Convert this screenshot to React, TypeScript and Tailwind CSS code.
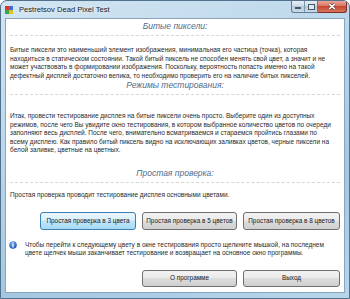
import clsx from "clsx";

const para1 = [
  "Битые пиксели это наименьший элемент изображения, минимальная его частица (точка), которая",
  "находиться в статическом состоянии. Такой битый пиксель не способен менять свой цвет, а значит и не",
  "может участвовать в формировании изображения. Поскольку, вероятность попасть именно на такой",
  "дефектный дисплей достаточно велика, то необходимо проверить его на наличие битых пикселей.",
];

const para2 = [
  "Итак, провести тестирование дисплея на битые пиксели очень просто. Выберите один из доступных",
  "режимов, после чего Вы увидите окно тестирования, в котором выбранное количество цветов по очереди",
  "заполняют весь дисплей. После чего, внимательно всматриваемся и стараемся пройтись глазами по",
  "всему дисплею. Как правило битый пиксель видно на исключающих заливках цветов, черные пиксели на",
  "белой заливке, цветные на цветных.",
];

const info = [
  "Чтобы перейти к следующему цвету в окне тестирования просто щелкните мышкой, на последнем",
  "цвете щелчек мыши заканчивает тестирование и возвращает на основное окно программы.",
];

function Lines({ lines }: { lines: string[] }) {
  return (
    <div className="leading-[8.5px]">
      {lines.map((l) => (
        <div key={l} className="whitespace-nowrap">
          {l}
        </div>
      ))}
    </div>
  );
}

function Heading({ children }: { children: string }) {
  return (
    <div className="h-[10px] text-center text-[8.5px] leading-[10px] italic text-[#536b89]">
      {children}
    </div>
  );
}

function Dash() {
  return <div className="mx-[4px] h-0 border-t border-dashed border-[#d6d6d6]" />;
}

function Btn({
  children,
  focused,
  className,
}: {
  children: string;
  focused?: boolean;
  className?: string;
}) {
  return (
    <button
      className={clsx(
        "rounded-[3px] border text-[6.4px] leading-none text-[#1a1a1a]",
        focused
          ? "border-[#3c7fb1] bg-[linear-gradient(#eaf6fd,#d9f0fc_45%,#bee6fd_50%,#a7d9f5)]"
          : "border-[#707070] bg-[linear-gradient(#f2f2f2,#ebebeb_45%,#dddddd_50%,#cfcfcf)]",
        className
      )}
    >
      {children}
    </button>
  );
}

function AppIcon() {
  return (
    <svg width="8" height="8" viewBox="0 0 8 8">
      <rect x="0" y="0" width="4" height="4" fill="#d93a2b" />
      <rect x="4" y="0" width="4" height="4" fill="#3a6fd9" />
      <rect x="0" y="4" width="4" height="4" fill="#3aa64a" />
      <rect x="4" y="4" width="4" height="4" fill="#e3c02b" />
    </svg>
  );
}

function InfoIcon() {
  return (
    <svg width="8" height="8" viewBox="0 0 8 8">
      <defs>
        <radialGradient id="ig" cx="40%" cy="30%" r="70%">
          <stop offset="0" stopColor="#7fb2ee" />
          <stop offset="1" stopColor="#1d55b0" />
        </radialGradient>
      </defs>
      <circle cx="4" cy="4" r="3.8" fill="url(#ig)" />
      <rect x="3.4" y="1.4" width="1.2" height="1.1" fill="#fff" />
      <rect x="3.4" y="3.1" width="1.2" height="3.4" fill="#fff" />
    </svg>
  );
}

export default function App() {
  return (
    <div className="flex h-[299px] w-[350px] flex-col overflow-hidden rounded-t-[7px] border border-[#52718d] bg-[linear-gradient(160deg,#d3e6f3,#b8d5e9_40%,#a3c8e0_70%,#b8d6ea)] font-['Liberation_Sans',Arial,sans-serif]">
      <div className="flex h-[17px] shrink-0 items-center">
        <div className="ml-[4px] mr-[6px] flex">
          <AppIcon />
        </div>
        <div className="text-[7.6px] text-[#1b1b1b] [text-shadow:0_0_5px_#ffffff]">
          Pestretsov Dead Pixel Test
        </div>
        <div className="mr-[2px] ml-auto flex self-start">
          <div className="flex h-[12px] w-[27px] items-center rounded-bl-[3px] border border-t-0 border-[#5f7b95] bg-[linear-gradient(#e4edf5,#cbdae7_50%,#b5c9d9_50%,#c9dbe8)]">
            <div className="flex w-[12px] justify-center">
              <div className="mt-[3px] h-[2px] w-[6px] border border-[#46586a] bg-white" />
            </div>
            <div className="h-full w-px bg-[#7f97ad]" />
            <div className="flex flex-1 justify-center">
              <div className="h-[6px] w-[7px] border border-[#46586a] bg-[#dfe9f2]" />
            </div>
          </div>
          <div className="flex h-[12px] w-[29px] items-center justify-center rounded-br-[3px] border border-t-0 border-l-0 border-[#7a3126] bg-[linear-gradient(#eba597,#d7705c_50%,#c34a33_50%,#d9735a)]">
            <svg width="8" height="7" viewBox="0 0 8 7">
              <path d="M1 0.8 L7 6.2 M7 0.8 L1 6.2" stroke="#5a1a10" strokeWidth="2.6" />
              <path d="M1 0.8 L7 6.2 M7 0.8 L1 6.2" stroke="#ffffff" strokeWidth="1.6" />
            </svg>
          </div>
        </div>
      </div>

      <div className="mx-[4px] flex h-[275px] shrink-0 flex-col border border-[#8aa4bd] bg-white pt-[2px] text-[6.5px] text-[#2a2a2a]">
        <Heading>Битые пиксели:</Heading>
        <div className="mt-[4px]">
          <Dash />
        </div>
        <div className="mt-[10px] px-[4px]">
          <Lines lines={para1} />
        </div>

        <Heading>Режимы тестирования:</Heading>
        <div className="mt-[4px]">
          <Dash />
        </div>
        <div className="mt-[17px] px-[4px]">
          <Lines lines={para2} />
        </div>

        <div className="mt-[13.5px]">
          <Heading>Простая проверка:</Heading>
        </div>
        <div className="mt-[4px]">
          <Dash />
        </div>
        <div className="mt-[8px] px-[4px]">
          <Lines lines={["Простая проверка проводит тестирование дисплея основными цветами."]} />
        </div>

        <div className="mt-[12.5px] flex justify-end gap-[6px] pr-[4px]">
          <Btn focused className="h-[18px] w-[96px]">
            Простая проверка в 3 цвета
          </Btn>
          <Btn className="h-[18px] w-[95px]">Простая проверка в 5 цветов</Btn>
          <Btn className="h-[18px] w-[97px]">Простая проверка в 8 цветов</Btn>
        </div>

        <div className="mt-[10.75px] flex gap-[8px] pl-[3px]">
          <div className="mt-[0.5px] flex">
            <InfoIcon />
          </div>
          <Lines lines={info} />
        </div>

        <div className="mt-[12.25px] flex justify-end gap-[6px] pr-[4px]">
          <Btn className="h-[17px] w-[95px]">О программе</Btn>
          <Btn className="h-[17px] w-[97px]">Выход</Btn>
        </div>
      </div>
    </div>
  );
}
